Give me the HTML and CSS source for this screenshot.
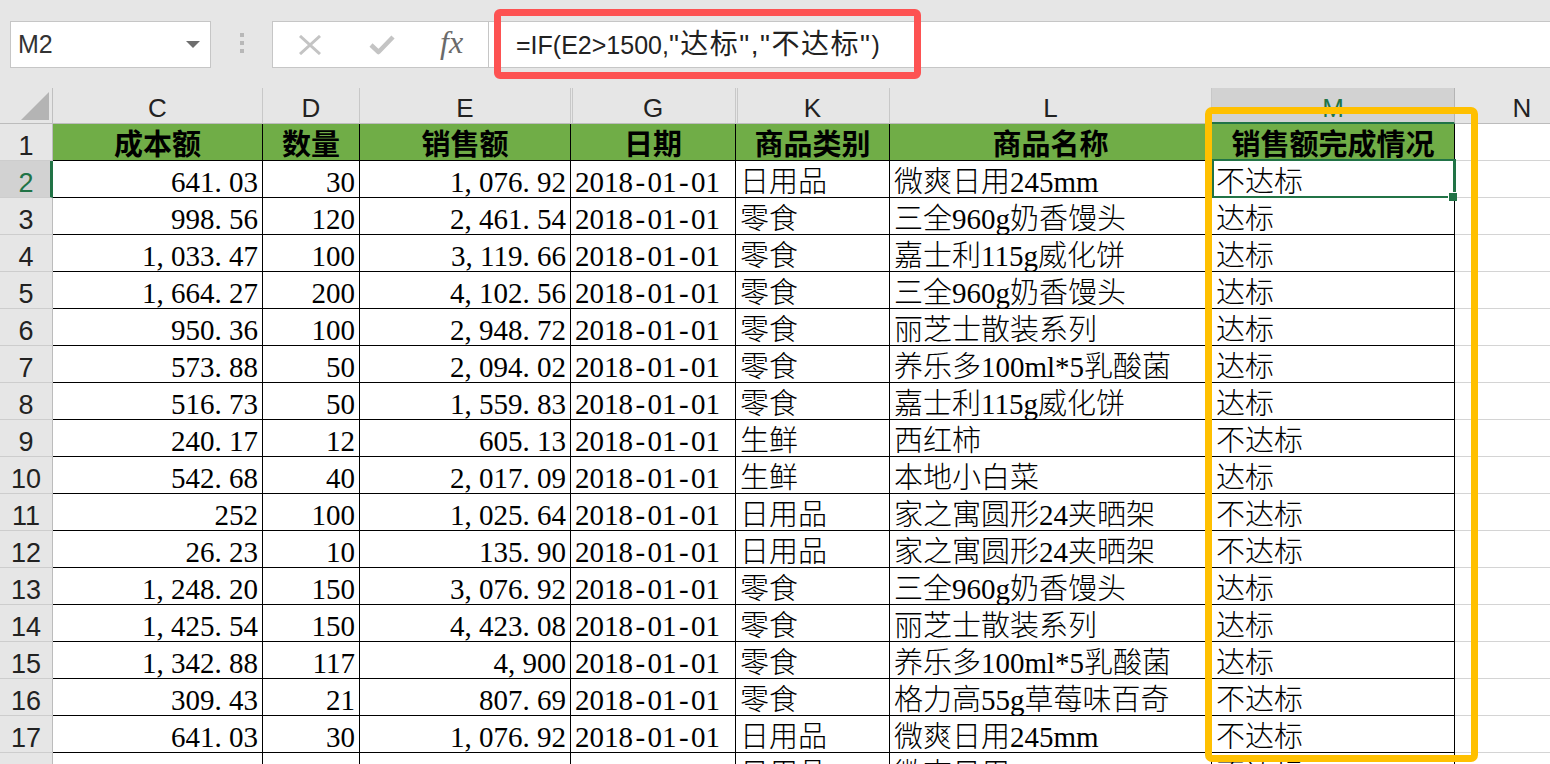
FILE: index.html
```html
<!DOCTYPE html>
<html lang="zh-CN">
<head>
<meta charset="utf-8">
<title>Excel</title>
<link rel="stylesheet" href="styles.css">
</head>
<body>
<div class="app">
  <div class="fbar">
    <div class="namebox"><span class="nb-text">M2</span><span class="nb-arrow"></span></div>
    <div class="grip"><i></i><i></i><i></i></div>
    <div class="fbtns">
      <svg class="ico-x" width="24" height="20" viewBox="0 0 24 20"><path d="M2 1 L22 19 M22 1 L2 19" stroke="#c4c4c4" stroke-width="3" fill="none"/></svg>
      <svg class="ico-ok" width="26" height="21" viewBox="0 0 26 21"><path d="M2 11 L9.5 18 L24 3" stroke="#c4c4c4" stroke-width="4.5" fill="none" stroke-linejoin="round"/></svg>
      <span class="fx">fx</span>
    </div>
    <div class="finput">=IF(E2&gt;1500,<span class="q">"达标","不达标"</span>)</div>
  </div>

  <div class="sheet">
    <div class="corner"><span class="tri"></span></div>
    <div class="ch">C</div>
    <div class="ch">D</div>
    <div class="ch">E</div>
    <div class="ch hid">G</div>
    <div class="ch hid">K</div>
    <div class="ch">L</div>
    <div class="ch sel">M</div>
    <div class="ch last">N</div>

    <div class="rh">1</div>
    <div class="c g">成本额</div>
    <div class="c g">数量</div>
    <div class="c g">销售额</div>
    <div class="c g">日期</div>
    <div class="c g">商品类别</div>
    <div class="c g">商品名称</div>
    <div class="c g">销售额完成情况</div>
    <div class="c n"></div>

    <div class="rh sel">2</div>
    <div class="c r">641<span class="h">.</span>03</div>
    <div class="c r">30</div>
    <div class="c r">1<span class="h">,</span>076<span class="h">.</span>92</div>
    <div class="c">2018<span class="h d">-</span>01<span class="h d">-</span>01</div>
    <div class="c">日用品</div>
    <div class="c">微爽日用245mm</div>
    <div class="c active">不达标<span class="handle"></span></div>
    <div class="c n"></div>

    <div class="rh">3</div>
    <div class="c r">998<span class="h">.</span>56</div>
    <div class="c r">120</div>
    <div class="c r">2<span class="h">,</span>461<span class="h">.</span>54</div>
    <div class="c">2018<span class="h d">-</span>01<span class="h d">-</span>01</div>
    <div class="c">零食</div>
    <div class="c">三全960g奶香馒头</div>
    <div class="c">达标</div>
    <div class="c n"></div>

    <div class="rh">4</div>
    <div class="c r">1<span class="h">,</span>033<span class="h">.</span>47</div>
    <div class="c r">100</div>
    <div class="c r">3<span class="h">,</span>119<span class="h">.</span>66</div>
    <div class="c">2018<span class="h d">-</span>01<span class="h d">-</span>01</div>
    <div class="c">零食</div>
    <div class="c">嘉士利115g威化饼</div>
    <div class="c">达标</div>
    <div class="c n"></div>

    <div class="rh">5</div>
    <div class="c r">1<span class="h">,</span>664<span class="h">.</span>27</div>
    <div class="c r">200</div>
    <div class="c r">4<span class="h">,</span>102<span class="h">.</span>56</div>
    <div class="c">2018<span class="h d">-</span>01<span class="h d">-</span>01</div>
    <div class="c">零食</div>
    <div class="c">三全960g奶香馒头</div>
    <div class="c">达标</div>
    <div class="c n"></div>

    <div class="rh">6</div>
    <div class="c r">950<span class="h">.</span>36</div>
    <div class="c r">100</div>
    <div class="c r">2<span class="h">,</span>948<span class="h">.</span>72</div>
    <div class="c">2018<span class="h d">-</span>01<span class="h d">-</span>01</div>
    <div class="c">零食</div>
    <div class="c">丽芝士散装系列</div>
    <div class="c">达标</div>
    <div class="c n"></div>

    <div class="rh">7</div>
    <div class="c r">573<span class="h">.</span>88</div>
    <div class="c r">50</div>
    <div class="c r">2<span class="h">,</span>094<span class="h">.</span>02</div>
    <div class="c">2018<span class="h d">-</span>01<span class="h d">-</span>01</div>
    <div class="c">零食</div>
    <div class="c">养乐多100ml*5乳酸菌</div>
    <div class="c">达标</div>
    <div class="c n"></div>

    <div class="rh">8</div>
    <div class="c r">516<span class="h">.</span>73</div>
    <div class="c r">50</div>
    <div class="c r">1<span class="h">,</span>559<span class="h">.</span>83</div>
    <div class="c">2018<span class="h d">-</span>01<span class="h d">-</span>01</div>
    <div class="c">零食</div>
    <div class="c">嘉士利115g威化饼</div>
    <div class="c">达标</div>
    <div class="c n"></div>

    <div class="rh">9</div>
    <div class="c r">240<span class="h">.</span>17</div>
    <div class="c r">12</div>
    <div class="c r">605<span class="h">.</span>13</div>
    <div class="c">2018<span class="h d">-</span>01<span class="h d">-</span>01</div>
    <div class="c">生鲜</div>
    <div class="c">西红柿</div>
    <div class="c">不达标</div>
    <div class="c n"></div>

    <div class="rh">10</div>
    <div class="c r">542<span class="h">.</span>68</div>
    <div class="c r">40</div>
    <div class="c r">2<span class="h">,</span>017<span class="h">.</span>09</div>
    <div class="c">2018<span class="h d">-</span>01<span class="h d">-</span>01</div>
    <div class="c">生鲜</div>
    <div class="c">本地小白菜</div>
    <div class="c">达标</div>
    <div class="c n"></div>

    <div class="rh">11</div>
    <div class="c r">252</div>
    <div class="c r">100</div>
    <div class="c r">1<span class="h">,</span>025<span class="h">.</span>64</div>
    <div class="c">2018<span class="h d">-</span>01<span class="h d">-</span>01</div>
    <div class="c">日用品</div>
    <div class="c">家之寓圆形24夹晒架</div>
    <div class="c">不达标</div>
    <div class="c n"></div>

    <div class="rh">12</div>
    <div class="c r">26<span class="h">.</span>23</div>
    <div class="c r">10</div>
    <div class="c r">135<span class="h">.</span>90</div>
    <div class="c">2018<span class="h d">-</span>01<span class="h d">-</span>01</div>
    <div class="c">日用品</div>
    <div class="c">家之寓圆形24夹晒架</div>
    <div class="c">不达标</div>
    <div class="c n"></div>

    <div class="rh">13</div>
    <div class="c r">1<span class="h">,</span>248<span class="h">.</span>20</div>
    <div class="c r">150</div>
    <div class="c r">3<span class="h">,</span>076<span class="h">.</span>92</div>
    <div class="c">2018<span class="h d">-</span>01<span class="h d">-</span>01</div>
    <div class="c">零食</div>
    <div class="c">三全960g奶香馒头</div>
    <div class="c">达标</div>
    <div class="c n"></div>

    <div class="rh">14</div>
    <div class="c r">1<span class="h">,</span>425<span class="h">.</span>54</div>
    <div class="c r">150</div>
    <div class="c r">4<span class="h">,</span>423<span class="h">.</span>08</div>
    <div class="c">2018<span class="h d">-</span>01<span class="h d">-</span>01</div>
    <div class="c">零食</div>
    <div class="c">丽芝士散装系列</div>
    <div class="c">达标</div>
    <div class="c n"></div>

    <div class="rh">15</div>
    <div class="c r">1<span class="h">,</span>342<span class="h">.</span>88</div>
    <div class="c r">117</div>
    <div class="c r">4<span class="h">,</span>900</div>
    <div class="c">2018<span class="h d">-</span>01<span class="h d">-</span>01</div>
    <div class="c">零食</div>
    <div class="c">养乐多100ml*5乳酸菌</div>
    <div class="c">达标</div>
    <div class="c n"></div>

    <div class="rh">16</div>
    <div class="c r">309<span class="h">.</span>43</div>
    <div class="c r">21</div>
    <div class="c r">807<span class="h">.</span>69</div>
    <div class="c">2018<span class="h d">-</span>01<span class="h d">-</span>01</div>
    <div class="c">零食</div>
    <div class="c">格力高55g草莓味百奇</div>
    <div class="c">不达标</div>
    <div class="c n"></div>

    <div class="rh">17</div>
    <div class="c r">641<span class="h">.</span>03</div>
    <div class="c r">30</div>
    <div class="c r">1<span class="h">,</span>076<span class="h">.</span>92</div>
    <div class="c">2018<span class="h d">-</span>01<span class="h d">-</span>01</div>
    <div class="c">日用品</div>
    <div class="c">微爽日用245mm</div>
    <div class="c">不达标</div>
    <div class="c n"></div>

    <div class="rh"></div>
    <div class="c r"></div>
    <div class="c r"></div>
    <div class="c r"></div>
    <div class="c"></div>
    <div class="c">日用品</div>
    <div class="c">微爽日用245mm</div>
    <div class="c">不达标</div>
    <div class="c n"></div>
  </div>

  <div class="mark-red"></div>
  <div class="mark-yellow"></div>
</div>
</body>
</html>
```

FILE: styles.css
```css
html, body {
  margin: 0;
  padding: 0;
  background: #ffffff;
}

.app {
  position: relative;
  width: 1550px;
  height: 764px;
  overflow: hidden;
  background: #ffffff;
}

/* ---------- formula bar ---------- */
.fbar {
  height: 88px;
  box-sizing: border-box;
  padding-top: 21px;
  background: #e6e6e6;
  display: flex;
  align-items: flex-start;
}

.namebox {
  margin-left: 10px;
  width: 201px;
  height: 47px;
  box-sizing: border-box;
  border: 1px solid #c6c6c6;
  background: #ffffff;
  display: flex;
  align-items: center;
  justify-content: space-between;
  padding: 0 10px 0 7px;
}

.nb-text {
  font: 25px "Liberation Sans", Arial, sans-serif;
  color: #333333;
}

.nb-arrow {
  width: 0;
  height: 0;
  border-left: 7px solid transparent;
  border-right: 7px solid transparent;
  border-top: 7px solid #6e6e6e;
}

.grip {
  margin-left: 29px;
  padding-top: 12px;
  display: flex;
  flex-direction: column;
  gap: 4px;
}

.grip i {
  display: block;
  width: 4px;
  height: 4px;
  background: #b8b8b8;
}

.fbtns {
  margin-left: 28px;
  width: 217px;
  height: 47px;
  box-sizing: border-box;
  border: 1px solid #c6c6c6;
  background: #ffffff;
  display: flex;
  align-items: center;
}

.ico-x {
  margin-left: 25px;
}

.ico-ok {
  margin-left: 47px;
}

.fx {
  margin-left: 45px;
  font: italic 32px "Liberation Serif", "Times New Roman", serif;
  color: #6a6a6a;
  line-height: 45px;
  margin-top: -4px;
}

.finput {
  flex: 1;
  height: 47px;
  box-sizing: border-box;
  border-top: 1px solid #c6c6c6;
  border-bottom: 1px solid #c6c6c6;
  background: #ffffff;
  padding-left: 27px;
  font: 25px "Liberation Sans", "Noto Sans CJK SC", sans-serif;
  line-height: 45px;
  color: #222222;
  white-space: nowrap;
}

.finput .q {
  font-size: 28px;
  letter-spacing: 1.5px;
}

/* ---------- sheet grid ---------- */
.sheet {
  display: grid;
  grid-template-columns: 53px 210px 97px 211px 165px 154px 322px 243px 134px;
  grid-template-rows: 36px repeat(18, 37px);
}

.corner {
  position: relative;
  background: #e6e6e6;
  border-right: 1px solid #c0c0c0;
  border-bottom: 1px solid #bcbcbc;
  box-sizing: border-box;
}

.tri {
  position: absolute;
  right: 3px;
  bottom: 3px;
  width: 28px;
  height: 28px;
  background: #b4b4b4;
  clip-path: polygon(100% 0, 100% 100%, 0 100%);
}

.ch {
  box-sizing: border-box;
  background: #e6e6e6;
  border-right: 1px solid #c8c8c8;
  border-bottom: 1px solid #bcbcbc;
  font: 26px "Liberation Sans", Arial, sans-serif;
  color: #222222;
  text-align: center;
  line-height: 35px;
  padding-top: 3px;
}

.ch.hid {
  background: linear-gradient(to right, transparent 1px, #c8c8c8 1px, #c8c8c8 2px, transparent 2px), #e6e6e6;
}

.ch.sel {
  background: #d2d2d2;
  color: #217346;
  border-right: 1px solid #b4b4b4;
  border-bottom: 2px solid #217346;
}

.ch.last {
  border-right: none;
}

.rh {
  box-sizing: border-box;
  background: #e6e6e6;
  border-right: 1px solid #bcbcbc;
  border-bottom: 1px solid #cdcdcd;
  font: 27px "Liberation Sans", Arial, sans-serif;
  color: #222222;
  text-align: center;
  line-height: 36px;
  padding-top: 4px;
}

.rh.sel {
  background: #d2d2d2;
  color: #217346;
  border-right: 3px solid #217346;
  padding-left: 2px;
}

.c {
  position: relative;
  box-sizing: border-box;
  border-right: 1px solid #000000;
  border-bottom: 1px solid #000000;
  padding: 3px 4px 0 4px;
  font: 300 29px "Liberation Serif", "Noto Sans CJK SC", serif;
  line-height: 36px;
  color: #000000;
  white-space: nowrap;
  text-align: left;
}

.c.r {
  text-align: right;
}

.c.g {
  background: #70ad47;
  font-weight: 700;
  text-align: center;
}

.c.n {
  border-right: none;
  border-bottom: 1px solid #d4d4d4;
}

.h {
  display: inline-block;
  width: 0.5em;
  text-align: left;
}

.h.d {
  text-align: center;
}

/* active cell M2 */
.c.active::after {
  content: "";
  position: absolute;
  left: 0;
  top: -2px;
  right: -2px;
  bottom: -1px;
  border: 2px solid #217346;
  border-right-width: 3px;
  pointer-events: none;
}

.handle {
  position: absolute;
  right: -3px;
  bottom: -4px;
  width: 8px;
  height: 8px;
  background: #217346;
  border-left: 1px solid #ffffff;
  border-top: 1px solid #ffffff;
  z-index: 2;
}

/* ---------- annotation marks ---------- */
.mark-red {
  position: absolute;
  left: 494px;
  top: 9px;
  width: 427px;
  height: 70px;
  box-sizing: border-box;
  border: 7px solid #fd5252;
  border-radius: 6px;
}

.mark-yellow {
  position: absolute;
  left: 1205px;
  top: 107px;
  width: 273px;
  height: 655px;
  box-sizing: border-box;
  border: 7px solid #ffc000;
  border-radius: 7px;
}
```
